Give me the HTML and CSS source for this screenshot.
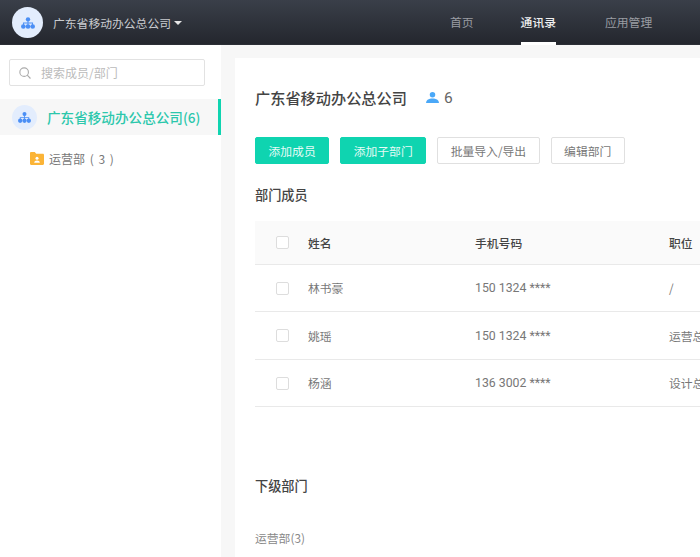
FILE: index.html
```html
<!DOCTYPE html>
<html lang="zh-CN">
<head>
<meta charset="utf-8">
<title>通讯录</title>
<link rel="stylesheet" href="styles.css">
</head>
<body>
<header class="topbar">
  <div class="brand">
    <span class="avatar avatar-lg">
      <svg class="org-icon" viewBox="0 0 18 15"><circle cx="9" cy="2.8" r="2.800"/><path d="M8.400 5h1.200v2h5.900v3h-1.200V8.200H9.600V10H8.400V8.200H3.700V10H2.500V7h5.900z"/><circle cx="3" cy="12" r="3"/><circle cx="9" cy="12" r="3"/><circle cx="15" cy="12" r="3"/></svg>
    </span>
    <span class="brand-name">广东省移动办公总公司</span>
    <span class="caret"></span>
  </div>
  <nav class="nav">
    <a class="nav-item">首页</a>
    <a class="nav-item active">通讯录</a>
    <a class="nav-item">应用管理</a>
  </nav>
</header>
<div class="body">
  <aside class="sidebar">
    <div class="search">
      <svg class="search-icon" viewBox="0 0 14 14"><circle cx="6" cy="6" r="5"/><path d="M9.600 9.600 13.400 13.400"/></svg>
      <span>搜索成员/部门</span>
    </div>
    <div class="tree-root">
      <span class="avatar avatar-sm">
        <svg class="org-icon" viewBox="0 0 18 15"><circle cx="9" cy="2.8" r="2.800"/><path d="M8.400 5h1.200v2h5.900v3h-1.200V8.200H9.600V10H8.400V8.200H3.700V10H2.500V7h5.900z"/><circle cx="3" cy="12" r="3"/><circle cx="9" cy="12" r="3"/><circle cx="15" cy="12" r="3"/></svg>
      </span>
      <span class="tree-root-name">广东省移动办公总公司(6)</span>
    </div>
    <div class="tree-child">
      <svg class="folder" viewBox="0 0 14 13"><path class="folder-bg" d="M0 1.200C0 .5.500 0 1.200 0h3.600l1.400 1.800h6.600c.7 0 1.200.5 1.200 1.200v8.800c0 .7-.5 1.200-1.200 1.200H1.200C.5 13 0 12.500 0 11.800z"/><circle class="folder-fg" cx="7" cy="6.200" r="1.500"/><path class="folder-fg" d="M4.200 10.800c0-1.500 1.300-2.300 2.800-2.300s2.800.8 2.800 2.300z"/></svg>
      <span>运营部 ( 3 )</span>
    </div>
  </aside>
  <main class="main">
    <section class="card">
      <div class="title-row">
        <h1 class="title">广东省移动办公总公司</h1>
        <svg class="user-icon" viewBox="0 0 14 12"><circle cx="7" cy="3" r="3"/><path d="M0 12c0-3.400 3-5 7-5s7 1.600 7 5z"/></svg>
        <span class="count">6</span>
      </div>
      <div class="actions">
        <button class="btn btn-primary">添加成员</button>
        <button class="btn btn-primary">添加子部门</button>
        <button class="btn">批量导入/导出</button>
        <button class="btn">编辑部门</button>
      </div>
      <h2 class="section-title">部门成员</h2>
      <div class="table">
        <div class="row row-head"><span class="check"></span><span class="c-name">姓名</span><span class="c-phone">手机号码</span><span class="c-job">职位</span></div>
        <div class="row"><span class="check"></span><span class="c-name">林书豪</span><span class="c-phone">150 1324 ****</span><span class="c-job">/</span></div>
        <div class="row row-tall"><span class="check"></span><span class="c-name">姚瑶</span><span class="c-phone">150 1324 ****</span><span class="c-job">运营总监</span></div>
        <div class="row"><span class="check"></span><span class="c-name">杨涵</span><span class="c-phone">136 3002 ****</span><span class="c-job">设计总监</span></div>
      </div>
      <h2 class="section-title sub-title">下级部门</h2>
      <div class="sub-item">运营部(3)</div>
    </section>
  </main>
</div>
</body>
</html>
```
FILE: styles.css
```css
* { box-sizing: border-box; }
html, body { margin: 0; height: 557px; overflow: hidden; }
body {
  font-family: "Noto Sans CJK SC", "Noto Sans", sans-serif;
  color: #666;
  background: #f7f7f7;
}
.topbar {
  height: 45px;
  display: flex;
  align-items: center;
  background: linear-gradient(180deg, #3a3f49 0%, #23262d 100%);
  box-shadow: inset 0 -1px 0 #2c2f36;
}
.brand { display: flex; align-items: center; padding-left: 12px; width: 421px; flex: none; }
.avatar { display: flex; align-items: center; justify-content: center; border-radius: 50%; background: #e3edfd; flex: none; }
.avatar-lg { width: 31px; height: 31px; }
.avatar-sm { width: 25px; height: 25px; }
.org-icon { fill: #4b8ff5; }
.avatar-lg .org-icon { width: 14px; height: 12px; }
.avatar-sm .org-icon { width: 13px; height: 11px; }
.brand-name { margin-left: 10px; font-size: 11.800px; color: #c9cbcf; white-space: nowrap; }
.caret { margin-left: 3px; width: 0; height: 0; border: 4px solid transparent; border-top-color: #e6e6e6; border-bottom: 0; }
.nav { display: flex; height: 45px; padding-left: 29px; }
.nav-item {
  display: flex;
  align-items: center;
  height: 45px;
  font-size: 11.800px;
  color: #9a9da3;
  border-bottom: 3px solid transparent;
  padding-top: 1px;
  white-space: nowrap;
  flex: none;
}
.nav-item:nth-child(1) { margin-right: 47px; }
.nav-item:nth-child(2) { margin-right: 49px; }
.nav-item.active { color: #f0f0f0; font-weight: 500; border-bottom-color: #fff; }
.body { display: flex; height: 512px; }
.sidebar { width: 221px; flex: none; background: #fff; padding-top: 14px; }
.search {
  margin-left: 9px;
  width: 196px;
  height: 27px;
  display: flex;
  align-items: center;
  padding-left: 9px;
  gap: 10px;
  border: 1px solid #e2e2e2;
  border-radius: 2px;
  font-size: 12px;
  color: #bbb;
}
.search-icon { width: 12px; height: 12px; fill: none; stroke: #aaa; stroke-width: 1.300; }
.tree-root {
  margin-top: 13px;
  height: 36px;
  display: flex;
  align-items: center;
  padding-left: 12px;
  background: #f7f7f7;
  border-right: 3px solid #0fd4b0;
}
.tree-root-name { margin-left: 10px; margin-bottom: 1px; font-size: 13.600px; font-weight: 500; color: #2cc7ac; white-space: nowrap; }
.tree-child { display: flex; align-items: center; margin-top: 13px; padding-left: 30px; font-size: 12px; color: #777; height: 20px; word-spacing: 2px; }
.folder { width: 14px; height: 13px; margin-right: 5px; }
.folder-bg { fill: #fbb437; }
.folder-fg { fill: #fff; }
.main { flex: 1; min-width: 0; padding: 13px 0 0 14px; overflow: hidden; }
.card { background: #fff; height: 600px; padding: 0 0 0 20px; overflow: hidden; }
.title-row { display: flex; align-items: center; height: 24px; margin-top: 27px; }
.title { margin: 0; font-size: 15.200px; font-weight: 500; color: #444; white-space: nowrap; }
.user-icon { width: 13px; height: 11px; margin-left: 19px; fill: #4aa8f8; }
.count { margin-left: 5px; padding-top: 2px; font-size: 15.500px; color: #666; font-family: "Roboto", sans-serif; }
.actions { display: flex; gap: 11px; margin-top: 28px; }
.btn {
  height: 27px;
  padding: 0 12.500px;
  font-family: inherit;
  font-size: 11.800px;
  color: #777;
  background: #fff;
  border: 1px solid #e0e0e0;
  border-radius: 2px;
  white-space: nowrap;
}
.btn-primary { background: #0fd4b0; border-color: #0fd4b0; color: #e6fbf6; }
.section-title { margin: 0; font-size: 13.200px; font-weight: 500; color: #444; line-height: 20px; }
.actions + .section-title { margin-top: 21px; }
.table { margin-top: 16px; width: 445px; font-size: 11.800px; }
.row {
  display: flex;
  align-items: center;
  height: 47px;
  border-bottom: 1px solid #e9e9e9;
  padding-left: 21px;
  line-height: 16px;
  color: #777;
  white-space: nowrap;
  overflow: hidden;
}
.row-tall { height: 48px; }
.row-head { height: 44px; background: #fafafa; color: #444; font-weight: 500; }
.check { width: 13px; height: 13px; border: 1px solid #ddd; border-radius: 2px; background: #fff; flex: none; }
.c-name { margin-left: 19px; width: 167px; flex: none; }
.c-phone { width: 194px; flex: none; font-family: "Roboto", sans-serif; font-size: 12.300px; }
.row-head .c-phone { font-family: inherit; font-size: 11.800px; }
.c-job { flex: none; }
.sub-title { margin-top: 69px; }
.sub-item { margin-top: 33px; font-size: 11.800px; color: #888; }
```
